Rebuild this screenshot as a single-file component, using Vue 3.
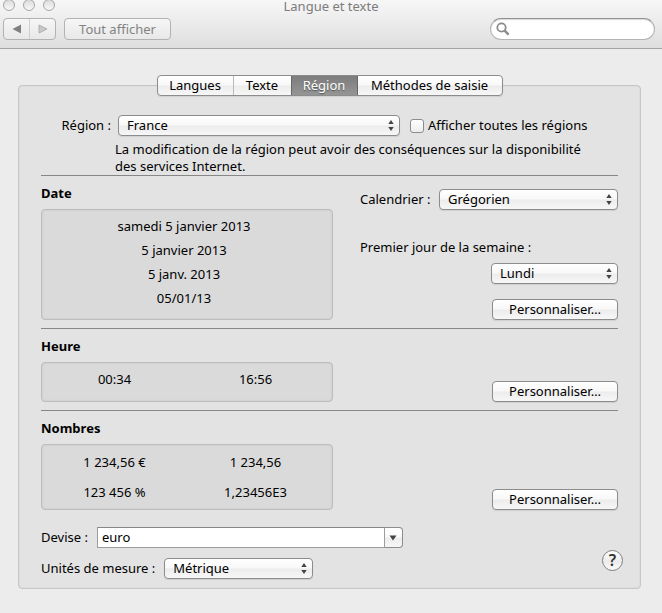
<script setup>
import { ref } from 'vue'

const tabs = ['Langues', 'Texte', 'Région', 'Méthodes de saisie']
const activeTab = ref('Région')
const region = ref('France')
const showAll = ref(false)
const calendar = ref('Grégorien')
const firstDay = ref('Lundi')
const currency = ref('euro')
const units = ref('Métrique')
const search = ref('')

const dates = ['samedi 5 janvier 2013', '5 janvier 2013', '5 janv. 2013', '05/01/13']
const times = ['00:34', '16:56']
const numbers = ['1 234,56 €', '1 234,56', '123 456 %', '1,23456E3']
</script>

<template>
  <div class="window">
    <header class="titlebar">
      <div class="title-row">
        <div class="lights"><i></i><i></i><i></i></div>
        <h1>Langue et texte</h1>
      </div>
      <div class="toolbar">
        <div class="nav">
          <button type="button" aria-label="Précédent">
            <svg width="10" height="10" viewBox="0 0 10 10"><path d="M9 0.5V9.5L0.5 5Z" fill="#808080" /></svg>
          </button>
          <button type="button" aria-label="Suivant">
            <svg width="10" height="10" viewBox="0 0 10 10"><path d="M1 1V9L9 5Z" fill="#c8c8c8" stroke="#a4a4a4" stroke-width="0.8" /></svg>
          </button>
        </div>
        <button type="button" class="show-all">Tout afficher</button>
        <label class="search">
          <svg width="14" height="14" viewBox="0 0 14 14" fill="none" stroke="#8b8b8b">
            <circle cx="5.5" cy="5.5" r="4.2" stroke-width="1.8" />
            <path d="M8.7 8.7L12.6 12.6" stroke-width="2.4" />
          </svg>
          <input v-model="search" type="search" aria-label="Rechercher" />
        </label>
      </div>
    </header>

    <main>
      <nav class="tabs">
        <button
          v-for="tab in tabs"
          :key="tab"
          type="button"
          :class="{ active: tab === activeTab }"
          @click="activeTab = tab"
        >{{ tab }}</button>
      </nav>

      <div class="panel">
        <div class="region-row">
          <label for="region" class="region-label">Région :</label>
          <div class="popup region-popup">
            <select id="region" v-model="region"><option>France</option></select>
            <svg width="6" height="11" viewBox="0 0 6 11"><path d="M3 0L5.7 4H0.3ZM3 11L0.3 7H5.7Z" fill="#444" /></svg>
          </div>
          <label class="check"><input v-model="showAll" type="checkbox" />Afficher toutes les régions</label>
        </div>
        <p class="note">La modification de la région peut avoir des conséquences sur la disponibilité des services Internet.</p>

        <section>
          <div class="samples">
            <h2>Date</h2>
            <div class="well dates">
              <span v-for="d in dates" :key="d">{{ d }}</span>
            </div>
          </div>
          <div class="options">
            <div class="calendar-row">
              <label for="calendar">Calendrier :</label>
              <div class="popup calendar-popup">
                <select id="calendar" v-model="calendar"><option>Grégorien</option></select>
                <svg width="6" height="11" viewBox="0 0 6 11"><path d="M3 0L5.7 4H0.3ZM3 11L0.3 7H5.7Z" fill="#444" /></svg>
              </div>
            </div>
            <label for="first-day" class="first-day">Premier jour de la semaine :</label>
            <div class="popup day-popup">
              <select id="first-day" v-model="firstDay"><option>Lundi</option></select>
              <svg width="6" height="11" viewBox="0 0 6 11"><path d="M3 0L5.7 4H0.3ZM3 11L0.3 7H5.7Z" fill="#444" /></svg>
            </div>
            <button type="button" class="push">Personnaliser…</button>
          </div>
        </section>

        <section>
          <div class="samples">
            <h2>Heure</h2>
            <div class="well times">
              <span v-for="t in times" :key="t">{{ t }}</span>
            </div>
          </div>
          <button type="button" class="push">Personnaliser…</button>
        </section>

        <section>
          <div class="samples">
            <h2>Nombres</h2>
            <div class="well numbers">
              <span v-for="n in numbers" :key="n">{{ n }}</span>
            </div>
          </div>
          <button type="button" class="push">Personnaliser…</button>
        </section>

        <div class="bottom">
          <div class="fields">
            <div class="field">
              <label for="currency">Devise :</label>
              <div class="combo">
                <input id="currency" v-model="currency" type="text" />
                <button type="button" aria-label="Choisir une devise">
                  <svg width="8" height="6" viewBox="0 0 8 6"><path d="M0.5 0.5H7.5L4 5.5Z" fill="#444" /></svg>
                </button>
              </div>
            </div>
            <div class="field">
              <label for="units">Unités de mesure :</label>
              <div class="popup units-popup">
                <select id="units" v-model="units"><option>Métrique</option></select>
                <svg width="6" height="11" viewBox="0 0 6 11"><path d="M3 0L5.7 4H0.3ZM3 11L0.3 7H5.7Z" fill="#444" /></svg>
              </div>
            </div>
          </div>
          <button type="button" class="help" aria-label="Aide">?</button>
        </div>
      </div>
    </main>
  </div>
</template>

<style>
body {
  background: #ececec;
}
</style>

<style scoped>
.window,
.window * {
  box-sizing: border-box;
}
.window {
  font: 13px/17px "Lucida Grande", "Noto Sans", sans-serif;
  color: #000;
}
button,
input,
select {
  font: inherit;
  color: inherit;
  margin: 0;
  padding: 0;
  appearance: none;
  outline: none;
}
h1,
h2,
p {
  margin: 0;
  font-size: 13px;
}

/* Title bar */
.titlebar {
  background: linear-gradient(#f7f7f7, #dedede);
  border-bottom: 1px solid #a3a3a3;
  padding-bottom: 8px;
}
.title-row {
  display: grid;
  grid-template-columns: 1fr auto 1fr;
  grid-template-rows: 12px;
  align-items: start;
  margin-bottom: 6px;
}
.lights {
  display: flex;
  gap: 8px;
  margin-top: -1px;
  padding-left: 3px;
}
.lights i {
  width: 12px;
  height: 12px;
  border: 1px solid #a5a5a5;
  border-radius: 50%;
  background: linear-gradient(#dcdcdc, #f8f8f8);
}
h1 {
  font-weight: 400;
  line-height: 12px;
  color: #7c7c7c;
}
.toolbar {
  display: flex;
  gap: 8px;
  padding: 0 7px 0 3px;
}
.nav {
  display: flex;
  width: 53px;
  height: 22px;
  border: 1px solid #b2b2b2;
  border-radius: 4px;
  background: linear-gradient(#f6f6f6, #e8e8e8);
}
.nav button {
  flex: 1;
  display: grid;
  place-items: center;
  border: 0;
  background: none;
}
.nav button + button {
  border-left: 1px solid #cfcfcf;
}
.show-all {
  width: 107px;
  height: 22px;
  border: 1px solid #b2b2b2;
  border-radius: 4px;
  background: linear-gradient(#f6f6f6, #e8e8e8);
  color: #838383;
}
.search {
  display: flex;
  align-items: center;
  gap: 4px;
  width: 165px;
  height: 22px;
  margin-left: auto;
  padding: 0 8px 0 5px;
  border: 1px solid #b4b4b4;
  border-top-color: #929292;
  border-radius: 11px;
  background: #fff;
  box-shadow: inset 0 1px 1px #d9d9d9;
}
.search input {
  flex: 1;
  min-width: 0;
  border: 0;
  background: none;
}

/* Tabs */
main {
  padding: 26px 21px 24px 18px;
}
.tabs {
  position: relative;
  display: grid;
  grid-template-columns: 76px 57px 67px 1fr;
  width: 346px;
  height: 21px;
  margin: 0 auto;
  border: 1px solid #8c8c8c;
  border-radius: 4px;
  background: linear-gradient(#fff, #f8f8f8 48%, #ececec 52%, #f7f7f7);
  box-shadow: 0 1px 1px #cfcfcf;
}
.tabs button {
  border: 0;
  background: none;
  line-height: 19px;
}
.tabs button:first-child {
  border-right: 1px solid #b9b9b9;
}
.tabs .active {
  color: #fff;
  background: linear-gradient(#7c7c7c, #959595);
  border: 1px solid #686868;
  border-width: 0 1px;
  text-shadow: 0 1px 1px #555;
}

/* Panel */
.panel {
  margin-top: -11px;
  padding: 29px 22px 9px;
  border: 1px solid #c6c6c6;
  border-radius: 4px;
  background: #e3e3e3;
  box-shadow: inset 0 0 1px #bbb;
}
.region-row {
  display: flex;
  align-items: center;
}
.region-label {
  width: 70px;
  margin-right: 7px;
  text-align: right;
}
.check {
  display: flex;
  align-items: center;
  gap: 4px;
  margin-left: 10px;
  white-space: nowrap;
}
.check input {
  width: 14px;
  height: 14px;
  border: 1px solid #8c8c8c;
  border-radius: 3px;
  background: linear-gradient(#fff, #ededed);
}
.note {
  margin: 5px 16px 0 74px;
}

.popup {
  display: grid;
  align-items: center;
  height: 21px;
}
.popup select,
.popup svg {
  grid-area: 1 / 1;
}
.popup svg {
  justify-self: end;
  margin-right: 6px;
  pointer-events: none;
}
.popup select,
.push {
  width: 100%;
  height: 21px;
  border: 1px solid #8c8c8c;
  border-radius: 4px;
  background: linear-gradient(#fff, #f8f8f8 48%, #ececec 52%, #f7f7f7);
  box-shadow: 0 1px 1px #cfcfcf;
  line-height: 19px;
}
.popup select {
  padding-left: 8px;
}
.region-popup {
  width: 282px;
}
.calendar-popup {
  width: 179px;
}
.day-popup {
  width: 127px;
}
.units-popup {
  width: 149px;
}
.push {
  width: 126px;
}

/* Sections */
section {
  display: flex;
  justify-content: space-between;
  align-items: flex-end;
  padding: 9px 0 8px;
  border-top: 1px solid #878787;
}
h2 {
  margin-bottom: 7px;
  font-weight: 700;
}
.samples {
  width: 292px;
}
.well {
  display: grid;
  text-align: center;
  border: 1px solid #bdbdbd;
  border-radius: 4px;
  background: #dadada;
  box-shadow: inset 0 0 2px #c2c2c2;
  padding: 4px 6px 0 2px;
}
.dates {
  line-height: 24px;
  padding-right: 8px;
  padding-bottom: 9px;
}
.times,
.numbers {
  grid-template-columns: 1fr 1fr;
}
.times {
  line-height: 24px;
  padding-bottom: 10px;
}
.numbers {
  line-height: 30px;
  padding-top: 2px;
  padding-bottom: 2px;
}
.options {
  display: flex;
  flex-direction: column;
  align-items: flex-end;
  width: 258px;
}
.calendar-row {
  display: flex;
  justify-content: space-between;
  align-items: center;
  align-self: stretch;
}
.first-day {
  align-self: stretch;
  margin: 29px 0 7px;
}
.options .push {
  margin-top: 15px;
}

/* Bottom fields */
.bottom {
  display: flex;
  justify-content: space-between;
  align-items: flex-end;
  margin: 9px -5px 0 0;
}
.fields {
  display: grid;
  gap: 10px;
}
.field {
  display: flex;
  align-items: center;
  gap: 9px;
}
.combo {
  display: flex;
  width: 306px;
  height: 21px;
}
.combo input {
  flex: 1;
  min-width: 0;
  padding: 0 4px;
  border: 1px solid #9c9c9c;
  border-top-color: #868686;
  background: #fff;
}
.combo button {
  display: grid;
  place-items: center;
  width: 18px;
  border: 1px solid #8c8c8c;
  border-left: 0;
  border-radius: 0 4px 4px 0;
  background: linear-gradient(#fff, #f8f8f8 48%, #ececec 52%, #f7f7f7);
}
.help {
  width: 21px;
  height: 21px;
  margin-bottom: 8px;
  border: 1px solid #808080;
  border-radius: 50%;
  background: linear-gradient(#fff, #ececec 55%, #fafafa);
  font-size: 16px;
  font-weight: 600;
  line-height: 19px;
  color: #333;
}
</style>
